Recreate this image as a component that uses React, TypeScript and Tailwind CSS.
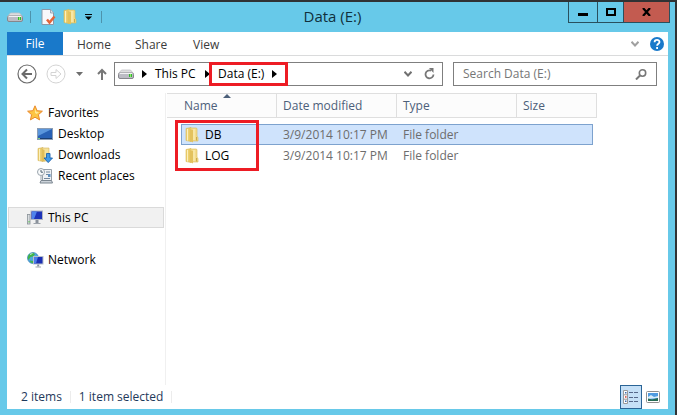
import { useState } from 'react';

interface FileRow {
  name: string;
  modified: string;
  type: string;
}

const FILES: FileRow[] = [
  { name: 'DB', modified: '3/9/2014 10:17 PM', type: 'File folder' },
  { name: 'LOG', modified: '3/9/2014 10:17 PM', type: 'File folder' },
];

const TABS = ['Home', 'Share', 'View'];

function DriveIcon() {
  return (
    <svg width="16" height="10" viewBox="0 0 16 10" className="shrink-0">
      <path d="M3.500 1h9l3 3.500H.5z" fill="#dededf" stroke="#c2c2c6" strokeWidth=".8" />
      <rect x=".5" y="4" width="15" height="5.500" rx="1.500" fill="#bcbcc4" stroke="#86868c" />
      <path d="M1.500 4.500h13" stroke="#f1f1f3" />
      <rect x="11" y="5" width="3" height="3" fill="#35b52c" />
      <path d="M12.500 5v3" stroke="#8af06c" />
    </svg>
  );
}

function PropertiesIcon() {
  return (
    <svg width="15" height="16" viewBox="0 0 15 16">
      <path d="M1 .5h8.500L12.500 4v11.500H1z" fill="#f7f8fb" stroke="#8e97a6" />
      <path d="M9.500 .5V4h3" fill="#dce1ea" stroke="#8e97a6" strokeWidth=".8" />
      <path d="M6 10.500l2.500 3 5-6" fill="none" stroke="#e2643a" strokeWidth="2.500" />
    </svg>
  );
}

function FolderIcon() {
  return (
    <svg width="14" height="16" viewBox="0 0 14 16" className="shrink-0">
      <path d="M1 1.500l5-1v14l-5-1z" fill="#eed06f" stroke="#d9b956" strokeWidth=".6" />
      <path d="M5 1h6.500l.5 1v7.500l1 .8v3.700H5z" fill="#f4dd8c" stroke="#d9b956" strokeWidth=".6" />
      <path d="M5 2l3 1v12.500l-3-1.500z" fill="#e3c25d" />
      <path d="M2.500 2v11.500M9 2v11" stroke="#fbf0bd" />
      <path d="M11.500 10v3.500" stroke="#c9ab50" />
    </svg>
  );
}

function StarIcon() {
  return (
    <svg width="16" height="16" viewBox="0 0 16 16">
      <path
        d="M8 .8l2.100 4.900 5.300.5-4 3.500 1.200 5.200L8 12.200l-4.600 2.700 1.200-5.200-4-3.500 5.300-.5z"
        fill="#fdc544"
        stroke="#ea8a2c"
        strokeLinejoin="round"
      />
      <path d="M8 3.500l1.200 3.200 2.800.4-2.200 1.800L8 8z" fill="#ffe897" />
    </svg>
  );
}

function DesktopIcon() {
  return (
    <svg width="16" height="12" viewBox="0 0 16 12">
      <rect x=".5" y=".5" width="15" height="11" fill="#2861b5" stroke="#8a9cb4" />
      <path d="M1 1h14L1 8z" fill="#5b96dc" />
      <path d="M1 10.500h14" stroke="#1a3e73" />
      <path d="M1 10.500h2" stroke="#7fd07a" />
    </svg>
  );
}

function DownloadsIcon() {
  return (
    <svg width="16" height="16" viewBox="0 0 16 16">
      <path d="M1 1.500l5-1v14l-5-1z" fill="#eed06f" stroke="#d3b35a" strokeWidth=".6" />
      <path d="M5 1h7v13H5z" fill="#f6e29a" stroke="#d3b35a" strokeWidth=".6" />
      <path d="M5 2l2.500 1v12L5 13.500z" fill="#e0bd58" />
      <path d="M2.500 2v11.500" stroke="#fbf0bd" />
      <path d="M9.500 6.500h3.500v4.500h2.500L11.200 15.600 7 11h2.500z" fill="#3f9ae8" stroke="#1d62ad" strokeWidth=".9" />
    </svg>
  );
}

function RecentIcon() {
  return (
    <svg width="16" height="16" viewBox="0 0 16 16">
      <path d="M5.500 1.500h9v11h-9z" fill="#eef1f4" stroke="#98a1aa" />
      <path d="M4 12.500h10.500l1 2.500H3z" fill="#ccd3da" stroke="#7c8791" />
      <path d="M9 4h4M9 6.500h2M7 10.500h6" stroke="#74889c" />
      <rect x="11" y="6" width="2.500" height="3" fill="#5a8dc0" />
      <circle cx="4" cy="4" r="3.500" fill="#f8fafb" stroke="#9aa4ad" />
      <path d="M4 2v2.200h2" fill="none" stroke="#4f6373" />
      <path d="M3 9h3M3 11h3" stroke="#9aa4ad" />
    </svg>
  );
}

function ComputerIcon() {
  return (
    <svg width="16" height="15" viewBox="0 0 16 15">
      <rect x=".5" y="4.500" width="2.500" height="9.500" fill="#d9dde0" stroke="#8b9298" strokeWidth=".8" />
      <path d="M2 11v1.500" stroke="#4fbd45" />
      <rect x="4" y="1" width="11.500" height="8.500" fill="#1d33b8" stroke="#b0b6c2" />
      <path d="M5 1.500h5L7 9H5z" fill="#4f83ec" />
      <path d="M10 10v3" stroke="#8b929c" strokeWidth="3" />
      <path d="M6.500 13.500h7" stroke="#9da3ab" />
    </svg>
  );
}

function NetworkIcon() {
  return (
    <svg width="17" height="16" viewBox="0 0 17 16">
      <circle cx="6" cy="6" r="5.500" fill="#4fa8dd" stroke="#3b81b4" strokeWidth=".7" />
      <path d="M2 2.500l4-1.800 2 1.600-2 2.200-2.500.5L1.500 8C.4 6 .8 4 2 2.500zM3 8.500l3 .5v2.300L3.500 10.500z" fill="#42b449" />
      <path d="M3 2.500l2.500-1" stroke="#c8f2c5" />
      <rect x="6.500" y="4.500" width="9.500" height="7.500" fill="#1b2fb2" stroke="#b8bfca" />
      <path d="M7 5h4l-2 6.500H7z" fill="#4a7ce8" />
      <path d="M11.200 12.500v2" stroke="#8d949e" strokeWidth="2" />
      <path d="M8.500 15h5.500" stroke="#9da3ab" />
    </svg>
  );
}

function CrumbArrow() {
  return (
    <svg width="5" height="8" viewBox="0 0 5 8" className="shrink-0">
      <path d="M0 0l5 4-5 4z" fill="#000" />
    </svg>
  );
}

function TitleBar() {
  return (
    <header className="grid h-[30px] grid-cols-[1fr_auto_1fr] items-start pr-[5px] pl-[7px]">
      <div className="flex h-[30px] items-center">
        <DriveIcon />
        <span className="ml-[7px] h-3 w-px bg-[#4d93ac]" />
        <button type="button" aria-label="Properties" className="ml-[10px]">
          <PropertiesIcon />
        </button>
        <button type="button" aria-label="New folder" className="ml-[7px]">
          <FolderIcon />
        </button>
        <button type="button" aria-label="Customize Quick Access Toolbar" className="ml-2">
          <svg width="7" height="6" viewBox="0 0 7 6">
            <path d="M0 .5h7" stroke="#000" />
            <path d="M0 2.500h7L3.500 6z" fill="#000" />
          </svg>
        </button>
        <span className="ml-[9px] h-3 w-px bg-[#4d93ac]" />
      </div>
      <h1 className="pr-3 text-[15px] leading-7 text-[#10303c]">Data (E:)</h1>
      <div className="flex h-[21px] justify-self-end border border-t-0 border-[#29505e]">
        <button type="button" aria-label="Minimize" className="flex w-7 items-center justify-center">
          <span className="mt-1 h-[3px] w-[10px] bg-black" />
        </button>
        <button type="button" aria-label="Maximize" className="flex w-[26px] items-center justify-center border-l border-[#29505e]">
          <span className="h-2 w-[10px] border-2 border-black" />
        </button>
        <button type="button" aria-label="Close" className="flex w-[46px] items-center justify-center border-l border-[#29505e] bg-[#c35b50]">
          <svg width="9" height="8" viewBox="0 0 9 8">
            <path d="M1 0l7 8M8 0L1 8" stroke="#000" strokeWidth="2.200" />
          </svg>
        </button>
      </div>
    </header>
  );
}

function Ribbon() {
  return (
    <nav className="flex h-6 items-stretch border-b border-[#dadbdc]">
      <button type="button" className="w-14 bg-[#1979ca] text-white">File</button>
      <div className="ml-[14px] flex">
        {TABS.map((tab) => (
          <button key={tab} type="button" className="w-[58px] pt-[2px] text-left text-[#3b3b3b]">{tab}</button>
        ))}
      </div>
      <div className="ml-auto flex items-center gap-[11px] pr-1">
        <button type="button" aria-label="Expand the Ribbon">
          <svg width="8" height="6" viewBox="0 0 8 6">
            <path d="M.5 .8L4 4.500 7.500 .8" fill="none" stroke="#a0a0a0" strokeWidth="2" />
          </svg>
        </button>
        <button type="button" aria-label="Help">
          <svg width="14" height="14" viewBox="0 0 14 14">
            <circle cx="7" cy="7" r="7" fill="#1979ca" />
            <path d="M4.600 5.200c0-3 4.900-3 4.900-.2 0 1.800-2.400 1.700-2.400 3.700M7.100 10v2" fill="none" stroke="#fff" strokeWidth="1.800" />
          </svg>
        </button>
      </div>
    </nav>
  );
}

function AddressBar() {
  return (
    <div className="flex items-center pt-[6px] pr-[11px] pb-[7px] pl-[10px]">
      <button type="button" aria-label="Back">
        <svg width="20" height="20" viewBox="0 0 20 20" fill="none" stroke="#6b6b6b">
          <circle cx="10" cy="10" r="9" strokeWidth="1.200" />
          <path d="M15 10H6M10 5.500L5.500 10l4.500 4.500" strokeWidth="2" />
        </svg>
      </button>
      <button type="button" aria-label="Forward" className="ml-[9px]">
        <svg width="20" height="20" viewBox="0 0 20 20" fill="none" stroke="#d4d4d4">
          <circle cx="10" cy="10" r="9" />
          <path d="M5 8.500h5V5.500l5 4.500-5 4.500v-3H5z" />
        </svg>
      </button>
      <button type="button" aria-label="Recent locations" className="ml-[10px]">
        <svg width="7" height="4" viewBox="0 0 7 4">
          <path d="M0 0h7L3.500 4z" fill="#6e6e6e" />
        </svg>
      </button>
      <button type="button" aria-label="Up" className="ml-[14px]">
        <svg width="10" height="12" viewBox="0 0 10 12" fill="none" stroke="#777" strokeWidth="2">
          <path d="M5 12V2M1 6l4-4 4 4" />
        </svg>
      </button>

      <div className="ml-[7px] flex h-6 flex-1 items-center border border-[#7f7f7f] pl-[3px]">
        <DriveIcon />
        <span className="ml-2">
          <CrumbArrow />
        </span>
        <button type="button" className="ml-2 w-[41px] text-left whitespace-nowrap">This PC</button>
        <span className="ml-[9px]">
          <CrumbArrow />
        </span>
        <div className="-my-px -ml-px flex h-6 w-[79px] items-center justify-between border-3 border-[#ed1c24] pr-2 pl-[6px]">
          <button type="button" className="whitespace-nowrap">Data (E:)</button>
          <CrumbArrow />
        </div>
        <button type="button" aria-label="Previous locations" className="ml-auto">
          <svg width="8" height="6" viewBox="0 0 8 6">
            <path d="M.5 .8L4 4.500 7.500 .8" fill="none" stroke="#707070" strokeWidth="2" />
          </svg>
        </button>
        <button type="button" aria-label="Refresh" className="mr-[7px] ml-[12px]">
          <svg width="11" height="12" viewBox="0 0 11 12">
            <path d="M7 2.600A4 4 0 1 0 9.500 6.500" fill="none" stroke="#777" strokeWidth="1.800" />
            <path d="M5 0h4.500v5z" fill="#777" />
          </svg>
        </button>
      </div>

      <label className="ml-[10px] flex h-6 w-[204px] items-center border border-[#7f7f7f] pr-[9px] pl-[9px]">
        <input
          type="text"
          aria-label="Search Data (E:)"
          placeholder="Search Data (E:)"
          className="min-w-0 flex-1 outline-none placeholder:text-[#767676]"
        />
        <svg width="12" height="11" viewBox="0 0 12 11" fill="none" stroke="#777">
          <circle cx="7.500" cy="4" r="3.200" strokeWidth="1.600" />
          <path d="M5 6.500L1 10.500" strokeWidth="2" />
        </svg>
      </label>
    </div>
  );
}

function NavPane() {
  return (
    <aside className="w-[159px] shrink-0 border-r border-[#f0f0f0] pt-[9px] pr-px pl-px">
      <a href="#favorites" className="flex h-[21px] items-center gap-[5px] pl-[19px]">
        <StarIcon />
        Favorites
      </a>
      <a href="#desktop" className="flex h-[21px] items-center gap-[5px] pl-[29px]">
        <DesktopIcon />
        Desktop
      </a>
      <a href="#downloads" className="flex h-[21px] items-center gap-[5px] pl-[29px]">
        <DownloadsIcon />
        Downloads
      </a>
      <a href="#recent" className="flex h-[21px] items-center gap-[5px] pl-[29px]">
        <RecentIcon />
        Recent places
      </a>
      <a href="#this-pc" className="mt-[21px] flex h-[21px] items-center gap-[5px] border border-[#dadada] bg-[#f1f1f1] pl-[18px]">
        <ComputerIcon />
        This PC
      </a>
      <a href="#network" className="mt-[21px] flex h-[21px] items-center gap-1 pl-[19px]">
        <NetworkIcon />
        Network
      </a>
    </aside>
  );
}

function FileList() {
  const [selected, setSelected] = useState('DB');

  return (
    <div className="relative flex-1 pl-px">
      <table className="w-[430px] table-fixed border-separate border-spacing-0 text-left">
        <colgroup>
          <col className="w-[14px]" />
          <col className="w-24" />
          <col className="w-[120px]" />
          <col className="w-[120px]" />
          <col className="w-[76px]" />
          <col className="w-1" />
        </colgroup>
        <thead className="text-[#4c607a]">
          <tr className="h-[25px] bg-[#fcfcfc]">
            <th colSpan={2} className="relative border-y border-r border-[#dfdfdf] p-0 pl-[17px] font-normal">
              Name
              <svg width="8" height="4" viewBox="0 0 8 4" className="absolute top-0 left-[56px]">
                <path d="M0 4h8L4 0z" fill="#4c607a" />
              </svg>
            </th>
            <th className="border-y border-r border-[#dfdfdf] p-0 pl-[6px] font-normal">Date modified</th>
            <th className="border-y border-r border-[#dfdfdf] p-0 pl-[6px] font-normal">Type</th>
            <th colSpan={2} className="border-y border-r border-[#dfdfdf] p-0 pl-[6px] font-normal">Size</th>
          </tr>
        </thead>
        <tbody className="text-[#6d6d6d]">
          <tr className="h-[6px]">
            <td colSpan={6} className="p-0" />
          </tr>
          {FILES.map((file) => {
            const cell = file.name === selected
              ? 'border-y border-[#7da2ce] bg-[#cfe3fc] p-0'
              : 'border-y border-transparent p-0';
            return (
              <tr key={file.name} className="h-[21px]" onClick={() => setSelected(file.name)}>
                <td className="p-0" />
                <td className={`${cell} border-l`}>
                  <div className="flex items-center gap-[6px] pl-[3px] text-black">
                    <FolderIcon />
                    {file.name}
                  </div>
                </td>
                <td className={`${cell} pl-[6px]`}>{file.modified}</td>
                <td className={`${cell} pl-[6px]`}>{file.type}</td>
                <td className={`${cell} border-r`} />
                <td className="p-0" />
              </tr>
            );
          })}
        </tbody>
      </table>
      {/* Callout around the two folders */}
      <div className="pointer-events-none absolute top-[27px] left-[9px] h-[51px] w-[84px] border-3 border-[#ed1c24]" />
    </div>
  );
}

function StatusBar() {
  return (
    <footer className="flex h-6 items-center pr-1 pl-[14px] text-[#1e395b]">
      <span>2 items</span>
      <span className="ml-2 h-3 w-px bg-[#ececec]" />
      <span className="ml-2">1 item selected</span>
      <span className="ml-2 h-3 w-px bg-[#ececec]" />
      <div className="ml-auto flex items-center">
        <button type="button" aria-label="Details view" className="flex h-6 w-[22px] items-center justify-center border border-[#2a6496] bg-[#c5e0f7]">
          <svg width="16" height="14" viewBox="0 0 16 14">
            <path d="M.5 .5h4v13h-4zM.5 4.800h4M.5 9.200h4" fill="#fff" stroke="#9a9a9a" />
            <rect x="2" y="2" width="1.500" height="1.500" fill="#3c6db0" />
            <rect x="2" y="6.200" width="1.500" height="1.500" fill="#d43a2c" />
            <rect x="2" y="10.500" width="1.500" height="1.500" fill="#3c6db0" />
            <path d="M6 2.500h4M11 2.500h4M6 7.500h4M11 7.500h4M6 11.500h4M11 11.500h4" stroke="#56688a" />
          </svg>
        </button>
        <button type="button" aria-label="Large icons view" className="flex h-6 w-[22px] items-center justify-center">
          <svg width="14" height="12" viewBox="0 0 14 12">
            <rect x=".5" y=".5" width="13" height="11" rx="1" fill="#fff" stroke="#8f8f8f" />
            <rect x="2" y="2" width="10" height="8" fill="#4f9be0" />
            <path d="M2 6l3-2 3 2 4-1v2l-10 1z" fill="#d9edf9" />
            <path d="M2 7.500l4 1 6-1.500v3H2z" fill="#256b52" />
          </svg>
        </button>
      </div>
    </footer>
  );
}

export default function App() {
  return (
    <div className="flex min-h-screen flex-col border-t-2 border-r-2 border-[#303234] bg-[#67c9e9] font-['Open_Sans',sans-serif] text-[12px] leading-4 text-black">
      <TitleBar />
      <div className="mx-[7px] mb-[6px] flex flex-1 flex-col bg-white">
        <Ribbon />
        <AddressBar />
        <main className="flex flex-1">
          <NavPane />
          <FileList />
        </main>
        <StatusBar />
      </div>
    </div>
  );
}
